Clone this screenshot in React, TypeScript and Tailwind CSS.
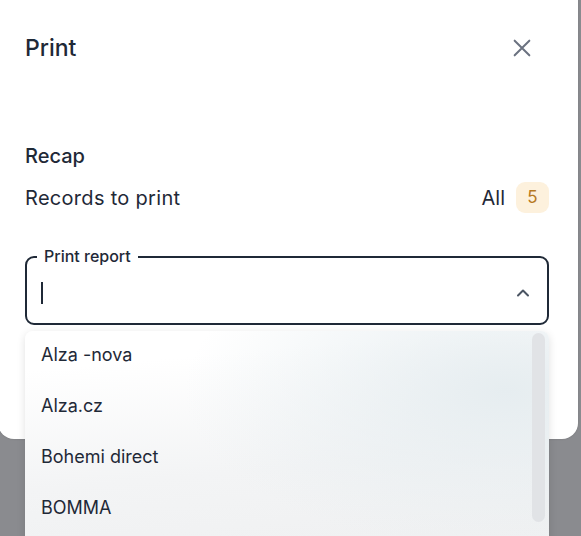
import React from "react";

const items = ["Alza -nova", "Alza.cz", "Bohemi direct", "BOMMA"];

export default function App() {
  return (
    <div
      className="relative w-[581px] h-[536px] overflow-hidden bg-[#8a8b8f]"
      style={{ fontFamily: "Inter, 'Noto Sans', sans-serif" }}
    >
      {/* Modal */}
      <div className="absolute left-[-2px] top-[-20px] w-[580px] h-[459px] rounded-2xl bg-white shadow-[0_0_2px_rgba(0,0,0,0.15)]">
        <div className="pt-[20px] pl-[27px] pr-[32px]">
          <div className="flex items-center justify-between h-[96px]">
            <h2 className="text-[23px] font-medium text-[#1f2937]">Print</h2>
            <svg width="22" height="22" viewBox="0 0 24 24" fill="none" stroke="#6b7280" strokeWidth="2.2" strokeLinecap="round" className="mr-[13px]">
              <path d="M4 4L20 20M20 4L4 20" />
            </svg>
          </div>
          <div className="mt-[47px] text-[20px] font-medium text-[#1f2937] leading-[26px]">Recap</div>
          <div className="mt-[13px] flex items-center justify-between">
            <span className="text-[20px] text-[#1f2937] leading-[30px] tracking-[0.3px]">Records to print</span>
            <div className="flex items-center gap-[11px] mr-[-3px]">
              <span className="text-[20px] text-[#1f2937]">All</span>
              <span className="w-[33px] h-[31px] rounded-[9px] bg-[#fdf1dd] text-[#b7791f] text-[17px] flex items-center justify-center">5</span>
            </div>
          </div>
          {/* Outlined field */}
          <div className="relative mt-[43px] mr-[-3px] h-[69px] rounded-[9px] border-2 border-[#1f2937] flex items-center pl-[14px] pr-[14px]">
            <span className="absolute left-[10px] top-[-12px] bg-white px-[7px] text-[16px] font-medium text-[#1f2937] leading-[20px]">Print report</span>
            <span className="w-[1.5px] h-[22px] bg-[#1f2937] mt-[4px]" />
            <div className="flex-1" />
            <svg width="20" height="20" viewBox="0 0 24 24" fill="none" stroke="#4b5563" strokeWidth="2.4" strokeLinecap="round" strokeLinejoin="round" className="mt-[4px]">
              <path d="M6 15l6-6 6 6" />
            </svg>
          </div>
        </div>
      </div>

      {/* Dropdown menu */}
      <div
        className="absolute left-[25px] top-[331px] w-[524px] h-[220px] rounded-[8px] shadow-[0_2px_8px_rgba(0,0,0,0.12)] overflow-hidden"
        style={{
          background:
            "radial-gradient(ellipse 320px 160px at 480px 60px, #e6edf0 0%, rgba(230,237,240,0) 100%), linear-gradient(175deg, #ffffff 15%, #f3f4f5 60%, #eff0f1 100%)",
        }}
      >
        <div className="flex flex-col">
          {items.map((t) => (
            <div key={t} className="h-[51px] flex items-center pl-[16px] pb-[4px] text-[18px] text-[#1f2937]">
              {t}
            </div>
          ))}
        </div>
        <div className="absolute right-[4px] top-[2px] w-[13px] h-[189px] rounded-full bg-[#e1e3e6]" />
      </div>
    </div>
  );
}
